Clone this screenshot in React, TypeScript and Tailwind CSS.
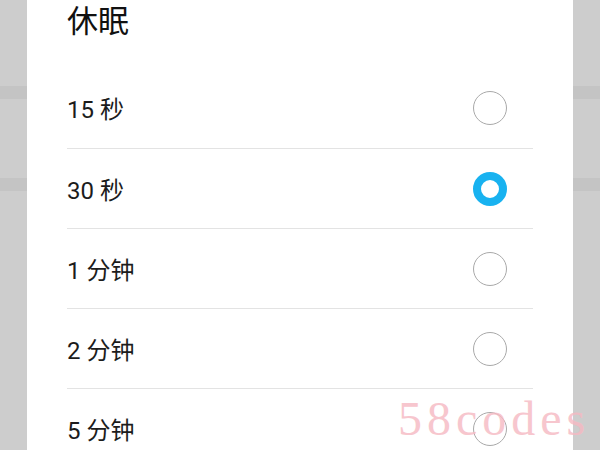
import React from 'react';

const options = ['15 秒', '30 秒', '1 分钟', '2 分钟', '5 分钟'];
const selected = 1;

function Radio({ checked }: { checked: boolean }) {
  if (checked) {
    return <div className="w-[34px] h-[34px] rounded-full border-[8px] border-[#18b2f0] bg-white" />;
  }
  return <div className="w-[34px] h-[34px] rounded-full border-[1.5px] border-[#a9a9a9] bg-white" />;
}

function Band() {
  return (
    <div className="flex flex-col">
      <div className="h-[86px]" />
      <div className="h-[13px] bg-[#c4c4c4]" />
      <div className="h-[79px]" />
      <div className="h-[13px] bg-[#c4c4c4]" />
    </div>
  );
}

export default function App() {
  return (
    <div
      className="relative w-[600px] h-[450px] overflow-hidden bg-[#cdcdcd] flex"
      style={{ fontFamily: 'Roboto, "Noto Sans CJK SC", sans-serif' }}
    >
      <div className="w-[27px]">
        <Band />
      </div>
      <div className="w-[546px] bg-white px-[40px]">
        <div className="h-[43px] leading-[43px] text-[31px] text-[#111]">休眠</div>
        <div className="h-[25px]" />
        {options.map((o, i) => (
          <div
            key={o}
            className={`h-[80px] flex items-center justify-between pr-[26px] ${i > 0 ? 'border-t border-[#e3e3e3]' : ''}`}
          >
            <span className="text-[24px] pt-[4px] text-[#1c1c1c]">{o}</span>
            <Radio checked={i === selected} />
          </div>
        ))}
      </div>
      <div className="w-[27px]">
        <Band />
      </div>
      <div
        className="absolute left-[398px] top-[383px] text-[48px] tracking-[5px] text-[#f6b9c2] opacity-80 pointer-events-none"
        style={{ fontFamily: '"Liberation Serif", serif' }}
      >
        58codes
      </div>
    </div>
  );
}
